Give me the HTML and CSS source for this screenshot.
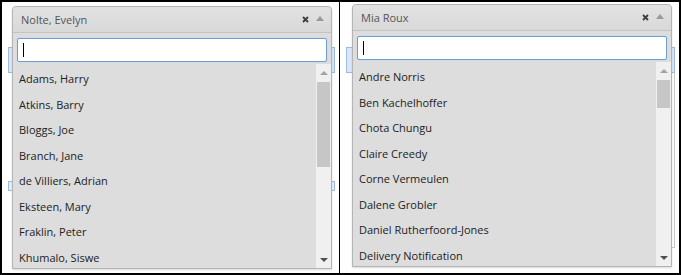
FILE: index.html
```html
<!DOCTYPE html>
<html lang="en">
<head>
    <meta charset="UTF-8">
    <title>Select dropdowns</title>
    <link rel="stylesheet" href="styles.css">
</head>
<body>
    <div class="frame">
        <!-- Left: surname first -->
        <div class="panel panel-left">
            <div class="field"></div>
            <div class="field field-low"></div>
            <div class="dropdown">
                <div class="dd-head">
                    <span class="dd-value">Nolte, Evelyn</span>
                    <svg class="dd-clear" width="7" height="7" viewBox="0 0 7 7"><path d="M1 1L6 6M6 1L1 6" stroke="#3c3c3c" stroke-width="1.8"/></svg>
                    <span class="dd-arrow"></span>
                </div>
                <div class="dd-search"><span class="caret"></span></div>
                <div class="dd-list">
                    <ul class="dd-items">
                        <li>Adams, Harry</li>
                        <li>Atkins, Barry</li>
                        <li>Bloggs, Joe</li>
                        <li>Branch, Jane</li>
                        <li>de Villiers, Adrian</li>
                        <li>Eksteen, Mary</li>
                        <li>Fraklin, Peter</li>
                        <li>Khumalo, Siswe</li>
                    </ul>
                    <div class="scrollbar">
                        <span class="sb-up"></span>
                        <div class="sb-track"><div class="sb-thumb" style="margin-top: 1px; height: 85px;"></div></div>
                        <span class="sb-down"></span>
                    </div>
                </div>
            </div>
        </div>

        <!-- Right: first name first -->
        <div class="panel panel-right">
            <div class="field"></div>
            <div class="field-side"></div>
            <div class="dropdown">
                <div class="dd-head">
                    <span class="dd-value">Mia Roux</span>
                    <svg class="dd-clear" width="7" height="7" viewBox="0 0 7 7"><path d="M1 1L6 6M6 1L1 6" stroke="#3c3c3c" stroke-width="1.8"/></svg>
                    <span class="dd-arrow"></span>
                </div>
                <div class="dd-search"><span class="caret"></span></div>
                <div class="dd-list">
                    <ul class="dd-items">
                        <li>Andre Norris</li>
                        <li>Ben Kachelhoffer</li>
                        <li>Chota Chungu</li>
                        <li>Claire Creedy</li>
                        <li>Corne Vermeulen</li>
                        <li>Dalene Grobler</li>
                        <li>Daniel Rutherfoord-Jones</li>
                        <li>Delivery Notification</li>
                    </ul>
                    <div class="scrollbar">
                        <span class="sb-up"></span>
                        <div class="sb-track"><div class="sb-thumb" style="margin-top: 1px; height: 28px;"></div></div>
                        <span class="sb-down"></span>
                    </div>
                </div>
            </div>
        </div>
    </div>
</body>
</html>
```

FILE: styles.css
```css
* {
    margin: 0;
    padding: 0;
    box-sizing: border-box;
}

body {
    font-family: 'Open Sans', 'Liberation Sans', sans-serif;
    background: #ffffff;
    color: #333;
}

.frame {
    width: 681px;
    height: 275px;
    border: 2px solid #000;
    display: grid;
    grid-template-columns: 337px 339px;
    column-gap: 1px;
    background: #000;
}

.panel {
    position: relative;
    background: #ffffff;
    overflow: hidden;
}

/* form fields sitting behind the open dropdown */
.field {
    margin: 45px 4px 0 6px;
    height: 26px;
    background: #dbe7f6;
    border: 1px solid #9dbbe3;
}

.field-low {
    margin: 108px 4px 0 6px;
    height: 10px;
    border-left: 1px solid #9dbbe3;
    background: #e6eef9;
}

.field-side {
    margin: 0 4px 0 auto;
    width: 12px;
    height: 175px;
    border: 1px solid #c8c8c8;
    border-top: none;
}

.dropdown {
    position: absolute;
    top: 4px;
    left: 10px;
    width: 320px;
    background: #dddddd;
    border: 1px solid #b4b4b4;
    border-radius: 4px 4px 0 0;
    box-shadow: 0 1px 2px rgba(0, 0, 0, 0.15);
}

.panel-right .dropdown {
    top: 2px;
    left: 12px;
}

.dd-head {
    height: 26px;
    display: flex;
    align-items: center;
    padding: 0 7px 0 8px;
    background: linear-gradient(#e2e2e2, #d9d9d9);
    border-bottom: 1px solid #c4c4c4;
    border-radius: 4px 4px 0 0;
    font-size: 11px;
    color: #555;
}

.dd-value {
    flex: 1;
}

.dd-clear {
    margin-right: 7px;
}

.dd-arrow {
    width: 0;
    height: 0;
    border-left: 4px solid transparent;
    border-right: 4px solid transparent;
    border-bottom: 5px solid #999;
    margin-bottom: 2px;
}

.dd-search {
    margin: 5px 4px 2px 4px;
    height: 24px;
    background: #fff;
    border: 1px solid #6c9fd8;
    border-radius: 2px;
    box-shadow: 0 0 1px #a9c7ec;
    display: flex;
    align-items: center;
    padding-left: 5px;
}

.caret {
    width: 1px;
    height: 14px;
    background: #000;
}

.dd-list {
    height: 204px;
    display: flex;
}

.dd-items {
    flex: 1;
    list-style: none;
    padding-top: 2px;
}

.dd-items li {
    height: 25.5px;
    line-height: 25.5px;
    padding-left: 6px;
    font-size: 11px;
    color: #222;
    white-space: nowrap;
}

.scrollbar {
    width: 15px;
    background: #f0f0f0;
    display: flex;
    flex-direction: column;
}

.sb-up,
.sb-down {
    height: 17px;
    display: flex;
    align-items: center;
    justify-content: center;
}

.sb-up::before {
    content: "";
    border-left: 4px solid transparent;
    border-right: 4px solid transparent;
    border-bottom: 4px solid #a3a3a3;
}

.sb-down::before {
    content: "";
    border-left: 4px solid transparent;
    border-right: 4px solid transparent;
    border-top: 4px solid #505050;
}

.sb-track {
    flex: 1;
    padding: 0 1px;
}

.sb-thumb {
    background: #c6c6c6;
}
```
